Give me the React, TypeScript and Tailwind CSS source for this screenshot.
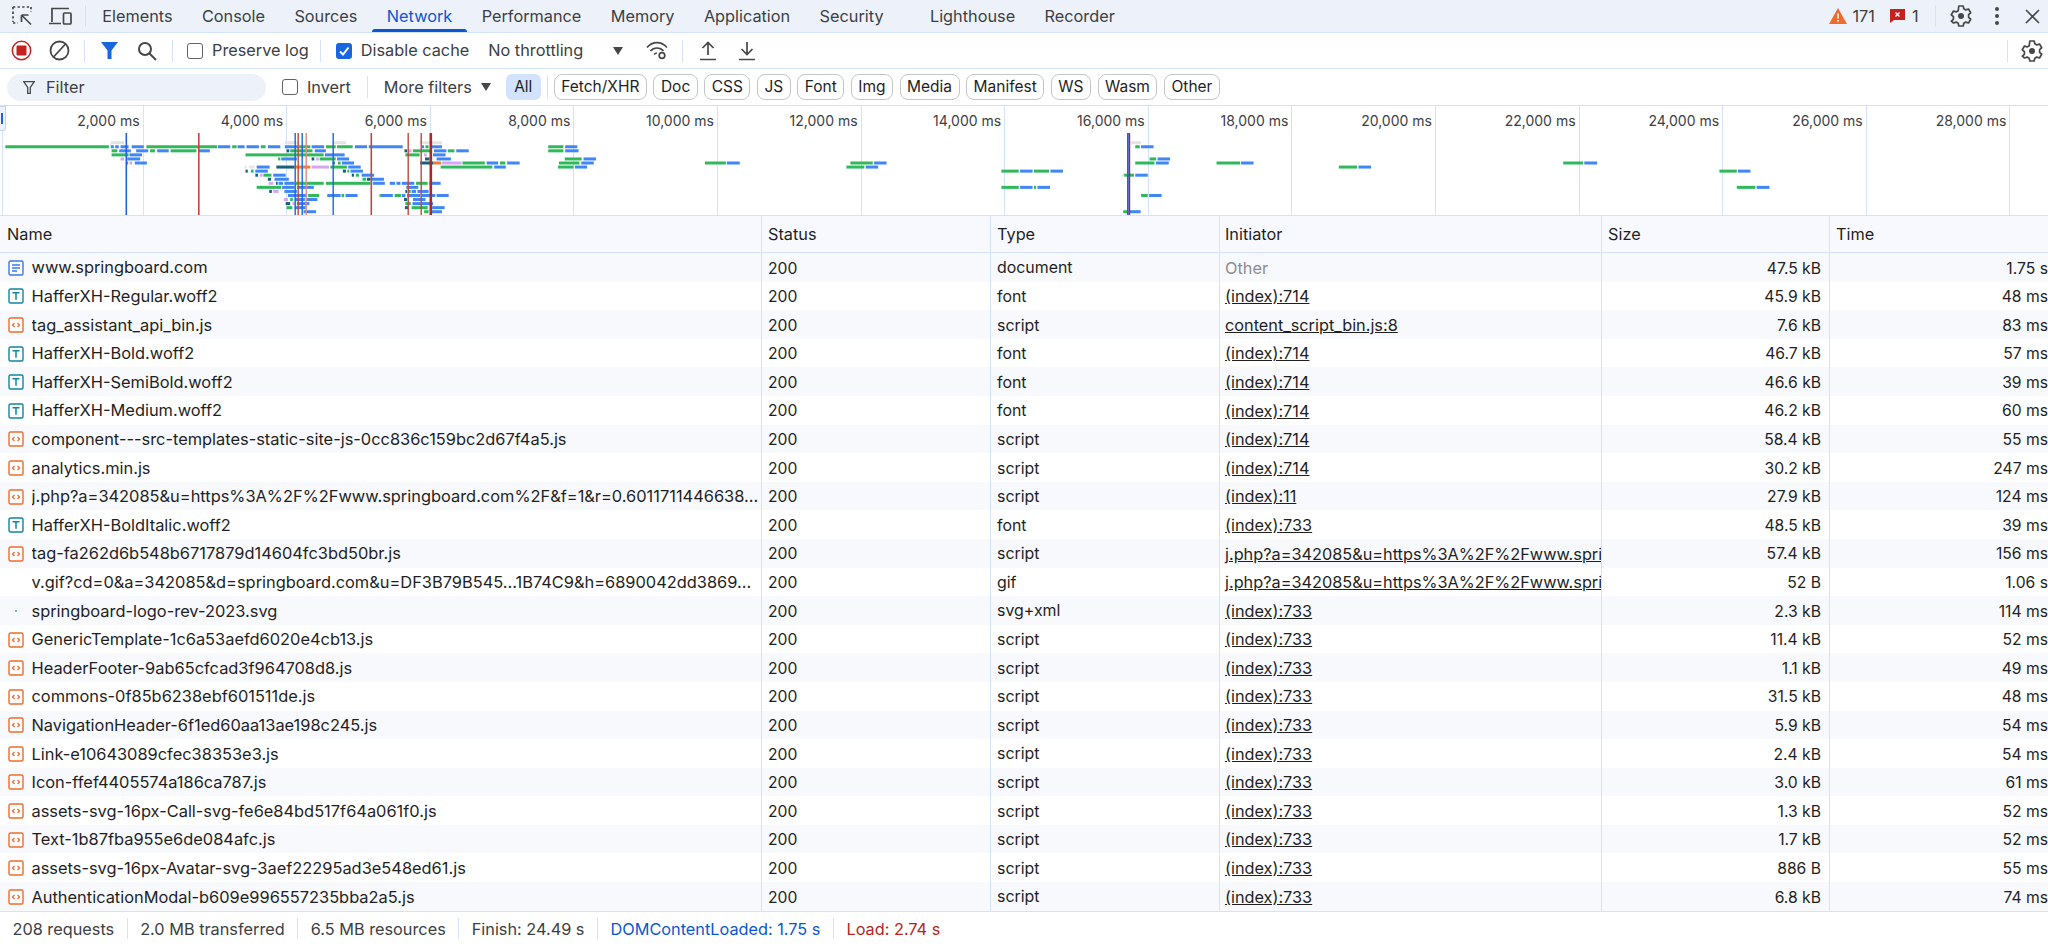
import { ReactNode } from "react";

const tabs = ["Elements", "Console", "Sources", "Network", "Performance", "Memory", "Application", "Security", "Lighthouse", "Recorder"];
const chips = ["Fetch/XHR", "Doc", "CSS", "JS", "Font", "Img", "Media", "Manifest", "WS", "Wasm", "Other"];
const ticks = ["2,000", "4,000", "6,000", "8,000", "10,000", "12,000", "14,000", "16,000", "18,000", "20,000", "22,000", "24,000", "26,000", "28,000"];

const spri = "j.php?a=342085&u=https%3A%2F%2Fwww.springboard.com%2F&f=1&r=0.6011711446638";

type Row = [string, string, string, string, string, string];

const rows: Row[] = [
  ["doc", "www.springboard.com", "document", "Other", "47.5 kB", "1.75 s"],
  ["font", "HafferXH-Regular.woff2", "font", "(index):714", "45.9 kB", "48 ms"],
  ["js", "tag_assistant_api_bin.js", "script", "content_script_bin.js:8", "7.6 kB", "83 ms"],
  ["font", "HafferXH-Bold.woff2", "font", "(index):714", "46.7 kB", "57 ms"],
  ["font", "HafferXH-SemiBold.woff2", "font", "(index):714", "46.6 kB", "39 ms"],
  ["font", "HafferXH-Medium.woff2", "font", "(index):714", "46.2 kB", "60 ms"],
  ["js", "component---src-templates-static-site-js-0cc836c159bc2d67f4a5.js", "script", "(index):714", "58.4 kB", "55 ms"],
  ["js", "analytics.min.js", "script", "(index):714", "30.2 kB", "247 ms"],
  ["js", "j.php?a=342085&u=https%3A%2F%2Fwww.springboard.com%2F&f=1&r=0.6011711446638...", "script", "(index):11", "27.9 kB", "124 ms"],
  ["font", "HafferXH-BoldItalic.woff2", "font", "(index):733", "48.5 kB", "39 ms"],
  ["js", "tag-fa262d6b548b6717879d14604fc3bd50br.js", "script", spri, "57.4 kB", "156 ms"],
  ["none", "v.gif?cd=0&a=342085&d=springboard.com&u=DF3B79B545...1B74C9&h=6890042dd3869...", "gif", spri, "52 B", "1.06 s"],
  ["svg", "springboard-logo-rev-2023.svg", "svg+xml", "(index):733", "2.3 kB", "114 ms"],
  ["js", "GenericTemplate-1c6a53aefd6020e4cb13.js", "script", "(index):733", "11.4 kB", "52 ms"],
  ["js", "HeaderFooter-9ab65cfcad3f964708d8.js", "script", "(index):733", "1.1 kB", "49 ms"],
  ["js", "commons-0f85b6238ebf601511de.js", "script", "(index):733", "31.5 kB", "48 ms"],
  ["js", "NavigationHeader-6f1ed60aa13ae198c245.js", "script", "(index):733", "5.9 kB", "54 ms"],
  ["js", "Link-e10643089cfec38353e3.js", "script", "(index):733", "2.4 kB", "54 ms"],
  ["js", "Icon-ffef4405574a186ca787.js", "script", "(index):733", "3.0 kB", "61 ms"],
  ["js", "assets-svg-16px-Call-svg-fe6e84bd517f64a061f0.js", "script", "(index):733", "1.3 kB", "52 ms"],
  ["js", "Text-1b87fba955e6de084afc.js", "script", "(index):733", "1.7 kB", "52 ms"],
  ["js", "assets-svg-16px-Avatar-svg-3aef22295ad3e548ed61.js", "script", "(index):733", "886 B", "55 ms"],
  ["js", "AuthenticationModal-b609e996557235bba2a5.js", "script", "(index):733", "6.8 kB", "74 ms"],
];

const colors: Record<string, string> = {
  g: "#2fb95b",
  b: "#4086f4",
  p: "#d5a6f3",
  t: "#17607c",
  o: "#ee7a35",
  l: "#e3e4e6",
};

// [row, start, end, colour], measured off the ruler; groups carry their own origin and scale
const barGroups: { dx: number; k: number; bars: [number, number, number, string][] }[] = [
  {
    dx: 0,
    k: 2.24,
    bars: [
      [0, 248, 278, "l"], [0, 638, 668, "l"], [0, 745, 775, "l"], [0, 940, 990, "l"],
      [1, 12, 244, "g"], [1, 248, 255, "b"], [1, 258, 266, "b"], [1, 270, 288, "b"], [1, 295, 322, "b"], [1, 328, 486, "g"], [1, 488, 516, "b"], [1, 520, 530, "g"], [1, 532, 548, "b"], [1, 552, 580, "b"], [1, 584, 595, "g"], [1, 600, 628, "b"], [1, 638, 668, "b"], [1, 670, 695, "g"], [1, 698, 726, "b"], [1, 730, 752, "g"], [1, 755, 790, "g"], [1, 795, 822, "b"], [1, 826, 902, "b"], [1, 945, 950, "b"], [1, 953, 960, "g"], [1, 965, 990, "b"],
      [2, 250, 263, "g"], [2, 267, 293, "b"], [2, 305, 332, "b"], [2, 336, 347, "g"], [2, 352, 378, "b"], [2, 382, 440, "g"], [2, 444, 470, "b"], [2, 642, 648, "t"], [2, 650, 700, "g"], [2, 705, 730, "b"], [2, 906, 912, "t"], [2, 914, 922, "p"], [2, 925, 968, "g"], [2, 972, 1000, "b"], [2, 1003, 1018, "g"], [2, 1022, 1050, "b"],
      [3, 250, 288, "g"], [3, 290, 318, "b"], [3, 550, 725, "g"], [3, 728, 772, "b"], [3, 908, 940, "g"], [3, 950, 956, "p"], [3, 970, 998, "b"],
      [4, 270, 278, "p"], [4, 285, 314, "b"], [4, 623, 628, "g"], [4, 630, 665, "b"], [4, 698, 704, "t"], [4, 708, 714, "p"], [4, 716, 752, "g"], [4, 755, 782, "b"], [4, 952, 962, "t"], [4, 978, 1010, "b"],
      [5, 283, 287, "b"], [5, 290, 296, "p"], [5, 302, 329, "b"], [5, 745, 750, "t"], [5, 757, 763, "g"], [5, 766, 793, "b"], [5, 941, 970, "t"], [5, 970, 988, "o"], [5, 990, 1034, "p"], [5, 1036, 1086, "g"], [5, 1090, 1116, "b"], [5, 1120, 1132, "g"], [5, 1136, 1164, "b"],
      [6, 548, 552, "l"], [6, 558, 570, "l"], [6, 575, 604, "b"], [6, 619, 660, "t"], [6, 660, 695, "o"], [6, 698, 737, "p"], [6, 740, 777, "g"], [6, 780, 808, "b"], [6, 987, 1103, "g"], [6, 1107, 1133, "b"],
      [7, 550, 555, "t"], [7, 562, 568, "g"], [7, 572, 600, "b"], [7, 768, 775, "t"], [7, 778, 782, "g"], [7, 785, 813, "b"],
      [8, 572, 578, "t"], [8, 582, 588, "p"], [8, 590, 608, "g"], [8, 612, 640, "b"], [8, 788, 793, "t"], [8, 797, 804, "g"], [8, 810, 838, "b"],
      [9, 600, 607, "t"], [9, 615, 647, "b"], [9, 812, 820, "g"], [9, 822, 830, "t"], [9, 833, 860, "b"],
      [10, 602, 612, "p"], [10, 618, 622, "t"], [10, 624, 634, "b"], [10, 637, 660, "b"], [10, 663, 725, "g"], [10, 730, 830, "g"], [10, 835, 862, "b"], [10, 873, 885, "b"], [10, 888, 897, "b"], [10, 900, 928, "b"], [10, 932, 958, "g"], [10, 962, 987, "b"],
      [11, 575, 630, "g"], [11, 632, 660, "b"], [11, 665, 703, "b"], [11, 910, 937, "b"],
      [12, 603, 609, "t"], [12, 612, 624, "p"], [12, 637, 665, "b"], [12, 908, 912, "t"], [12, 914, 920, "g"], [12, 922, 932, "b"], [12, 935, 960, "b"],
      [13, 645, 688, "b"], [13, 690, 715, "g"], [13, 733, 763, "b"], [13, 765, 771, "g"], [13, 774, 801, "b"], [13, 850, 853, "g"], [13, 853, 880, "b"], [13, 884, 898, "g"], [13, 900, 908, "b"], [13, 912, 942, "b"], [13, 945, 975, "b"], [13, 978, 1005, "b"],
      [14, 636, 645, "p"], [14, 650, 656, "g"], [14, 660, 683, "b"], [14, 687, 711, "b"], [14, 905, 912, "t"], [14, 925, 953, "b"],
      [15, 640, 650, "t"], [15, 655, 662, "p"], [15, 665, 693, "b"], [15, 908, 920, "g"], [15, 924, 970, "b"],
      [16, 642, 655, "g"], [16, 660, 685, "b"], [16, 907, 915, "t"], [16, 922, 958, "g"], [16, 968, 996, "b"],
      [17, 680, 708, "b"], [17, 950, 960, "g"], [17, 965, 990, "b"],
      [1, 1228, 1262, "g"], [1, 1266, 1293, "b"], [2, 1228, 1262, "g"], [2, 1266, 1296, "b"], [4, 1265, 1303, "g"], [4, 1307, 1335, "b"], [5, 1252, 1298, "g"], [5, 1302, 1330, "b"], [6, 1250, 1285, "g"], [6, 1288, 1315, "b"],
    ],
  },
  {
    dx: 700,
    k: 2.24,
    bars: [
      [5, 11, 58, "g"], [5, 60, 89, "b"], [5, 337, 387, "g"], [5, 390, 418, "b"], [6, 328, 368, "g"], [6, 371, 399, "b"],
      [7, 675, 714, "g"], [7, 717, 745, "b"], [7, 748, 782, "g"], [7, 785, 813, "b"],
      [8, 945, 950, "l"], [8, 950, 972, "g"], [8, 975, 1003, "b"],
      [11, 675, 714, "g"], [11, 717, 745, "b"], [11, 748, 753, "g"], [11, 756, 784, "b"],
      [13, 988, 1003, "g"], [13, 1006, 1034, "b"], [17, 948, 958, "g"], [17, 962, 987, "b"],
      [4, 1007, 1022, "g"], [4, 1025, 1053, "b"], [5, 975, 1018, "g"], [5, 1021, 1050, "b"], [5, 1157, 1210, "g"], [5, 1212, 1240, "b"],
      [1, 975, 985, "g"], [1, 988, 1016, "b"], [0, 965, 988, "l"], [6, 1431, 1472, "g"], [6, 1475, 1503, "b"],
    ],
  },
  {
    dx: 1400,
    k: 2.42,
    bars: [
      [5, 395, 443, "g"], [5, 446, 477, "b"], [7, 773, 815, "g"], [7, 818, 848, "b"], [11, 815, 860, "g"], [11, 863, 894, "b"],
    ],
  },
];

const markers: [number, string, number][] = [
  [125.5, "#1a66e0", 1.6], [198, "#c4463f", 1.6], [294.5, "#1a66e0", 1.4], [297.5, "#c4463f", 1.4], [301.5, "#1a66e0", 1.4], [305.5, "#e2897f", 1.4], [332.5, "#1a66e0", 1.4], [370.5, "#c4463f", 1.6], [407.5, "#c4463f", 1.4], [420.5, "#c4463f", 1.4], [429.5, "#b3261e", 2.6], [1127, "#1a66e0", 1.8], [1128.8, "#b3261e", 1.4],
];

const Overview = () => (
  <svg className="absolute left-0 top-0" width="2048" height="109" viewBox="0 0 2048 109">
    {barGroups.map((g) =>
      g.bars.map(([r, a, b, c], i) => (
        <rect key={`${g.dx}-${i}`} x={g.dx + a / g.k} y={35.2 + r * 4.06} width={(b - a) / g.k} height="3" fill={colors[c]} />
      ))
    )}
    {markers.map(([x, c, w]) => (
      <rect key={x} x={x} y="27" width={w} height="82" fill={c} />
    ))}
  </svg>
);

const Gear = ({ className = "" }: { className?: string }) => (
  <svg className={className} width="22" height="24" viewBox="0 0 22 24" fill="none" stroke="#474747" strokeWidth="1.7" strokeLinejoin="round">
    <path d="M8.8 2h4.4l.6 2.8 2 1.1 2.7-.9 2.2 3.8-2.1 1.9v2.6l2.1 1.9-2.2 3.8-2.7-.9-2 1.1-.6 2.8H8.8l-.6-2.8-2-1.1-2.7.9L1.300 17.200l2.100-1.900v-2.600L1.300 10.800 3.500 7l2.700.9 2-1.100z" />
    <circle cx="11" cy="12" r="3" fill="#474747" stroke="none" />
  </svg>
);

const Divider = ({ className = "" }: { className?: string }) => <span className={`w-px h-[22px] bg-[#d3e3fd] shrink-0 ${className}`} />;

const Caret = ({ className = "" }: { className?: string }) => (
  <svg className={className} width="10" height="8" viewBox="0 0 10 8">
    <path d="M0 0h10L5 8z" fill="#474747" />
  </svg>
);

const FileIcon = ({ kind }: { kind: string }) => {
  if (kind === "none") return <span className="w-4 h-4 shrink-0" />;
  if (kind === "svg")
    return (
      <span className="w-4 h-4 shrink-0 flex items-center justify-center">
        <span className="w-[2px] h-[2px] bg-[#7fb5a6]" />
      </span>
    );
  const stroke = kind === "doc" ? "#3b78e7" : kind === "font" ? "#12859e" : "#ee6c2d";
  return (
    <svg className="shrink-0" width="16" height="16" viewBox="0 0 16 16" fill="none" stroke={stroke} strokeWidth="1.4">
      <rect x="1" y="1" width="14" height="14" rx="1.500" fill="#fff" />
      {kind === "doc" && <path d="M4 5h8M4 8h8M4 11h5" strokeWidth="1.500" />}
      {kind === "font" && <path d="M4.500 4.700h7M8 4.700v7" strokeWidth="1.500" />}
      {kind === "js" && <path d="M6.500 6 4.500 8l2 2M9.500 6l2 2-2 2" strokeWidth="1.300" />}
    </svg>
  );
};

const Check = ({ on, className = "" }: { on?: boolean; className?: string }) =>
  on ? (
    <span className={`w-4 h-4 rounded-[3px] bg-[#1a66e0] flex items-center justify-center shrink-0 ${className}`}>
      <svg width="12" height="12" viewBox="0 0 12 12" fill="none" stroke="#fff" strokeWidth="2">
        <path d="M2 6.500 5 9.500 10.500 2.500" />
      </svg>
    </span>
  ) : (
    <span className={`w-4 h-4 rounded-[3px] border border-[#5f6368] bg-white shrink-0 ${className}`} />
  );

const Cell = ({ className, children }: { className: string; children: ReactNode }) => (
  <div className={`h-full flex items-center overflow-hidden whitespace-nowrap shrink-0 ${className}`}>{children}</div>
);

const NetworkRow = ({ row, index }: { row: Row; index: number }) => {
  const [kind, name, type, initiator, size, time] = row;
  return (
    <div className={`flex h-[28.6px] ${index % 2 === 0 ? "bg-[#f7f9fd]" : "bg-white"}`}>
      <Cell className="w-[762px] pt-px pl-[8px] gap-[7.500px] border-r border-[#d3e3fd] text-[16.400px]">
        <FileIcon kind={kind} />
        <span className="overflow-hidden">{name}</span>
      </Cell>
      <Cell className="w-[229px] pt-[2px] pl-[6px] border-r border-[#d3e3fd] text-[15.700px]">200</Cell>
      <Cell className="w-[229px] pt-[2px] pl-[6px] border-r border-[#d3e3fd] text-[15.900px]">{type}</Cell>
      <Cell className="w-[382px] pt-px pl-[5px] border-r border-[#d3e3fd] text-[16.300px]">
        {initiator === "Other" ? <span className="text-[#8c8c8c]">Other</span> : <span className="underline">{initiator}</span>}
      </Cell>
      <Cell className="w-[228px] pt-[2px] justify-end pr-[8px] border-r border-[#d3e3fd] text-[15.700px]">{size}</Cell>
      <Cell className="w-[226px] pt-[2px] justify-end pr-[8px] text-[15.700px]">{time}</Cell>
    </div>
  );
};

export default function App() {
  return (
    <div className="h-[946px] w-[2048px] overflow-hidden bg-white flex flex-col text-[16.300px] text-[#1f1f1f] font-['Inter',sans-serif]">
      {/* tab strip */}
      <div className="h-[33px] shrink-0 bg-[#edf2fa] border-b border-[#d3e3fd] flex items-center text-[#3c4043]">
        <svg className="ml-[12px]" width="21" height="20" viewBox="0 0 21 20" fill="none" stroke="#474747" strokeWidth="1.700">
          <path d="M1 1h18M1 1v15M1 17h5M19 1v5" strokeDasharray="2.300 2.300" />
          <path d="M9.500 9 19 18.500M9.500 9v7M9.500 9h7" />
        </svg>
        <svg className="ml-[16px]" width="23" height="19" viewBox="0 0 23 19" fill="none" stroke="#474747" strokeWidth="1.700">
          <path d="M3 15V1.500h17M0 16.500h12" />
          <rect x="14.500" y="6" width="7.500" height="11" rx="1" />
        </svg>
        <Divider className="ml-[13px] mr-[1.500px]" />
        {tabs.map((t) => (
          <div
            key={t}
            className={`relative h-full pt-px flex items-center px-[14.700px] ${t === "Lighthouse" ? "ml-[17px]" : ""} ${t === "Network" ? "text-[#0b57d0]" : ""}`}
          >
            {t}
            {t === "Network" && <span className="absolute left-0 right-0 bottom-0 h-[3px] rounded-t bg-[#0b57d0]" />}
          </div>
        ))}
        <div className="ml-auto flex items-center">
          <svg width="18" height="16" viewBox="0 0 18 16">
            <path d="M9 0 18 16H0z" fill="#ee6c2d" />
            <path d="M9 5.500v5M9 12v1.800" stroke="#fff" strokeWidth="1.500" />
          </svg>
          <span className="ml-[5px]">171</span>
          <svg className="ml-[15px]" width="15" height="16" viewBox="0 0 15 16">
            <path d="M0 1h15v11H4l-4 3z" fill="#c5221f" />
            <path d="m5.500 4.500 4 4m0-4-4 4" stroke="#fff" strokeWidth="1.300" />
          </svg>
          <span className="ml-[7px]">1</span>
          <Divider className="ml-[16px]" />
          <Gear className="ml-[14px]" />
          <svg className="ml-[22px]" width="6" height="20" viewBox="0 0 6 20" fill="#474747">
            <circle cx="3" cy="3" r="2" />
            <circle cx="3" cy="10" r="2" />
            <circle cx="3" cy="17" r="2" />
          </svg>
          <svg className="ml-[25.500px] mr-[8px]" width="15" height="15" viewBox="0 0 15 15" stroke="#474747" strokeWidth="1.600">
            <path d="m1 1 13 13M14 1 1 14" />
          </svg>
        </div>
      </div>

      {/* toolbar */}
      <div className="h-[36px] shrink-0 border-b border-[#d3e3fd] flex items-center text-[#3c4043]">
        <svg className="ml-[11px]" width="21" height="21" viewBox="0 0 21 21">
          <circle cx="10.500" cy="10.500" r="9.200" fill="none" stroke="#c5221f" strokeWidth="1.500" />
          <rect x="5.500" y="5.500" width="10" height="10" rx="1" fill="#c5221f" />
        </svg>
        <svg className="ml-[17px]" width="21" height="21" viewBox="0 0 21 21" fill="none" stroke="#474747" strokeWidth="1.800">
          <circle cx="10.500" cy="10.500" r="9" />
          <path d="M4.500 17 16.500 4" />
        </svg>
        <Divider className="ml-[14px]" />
        <svg className="ml-[16px]" width="17" height="17" viewBox="0 0 17 17">
          <path d="M0 0h17l-6.500 8.500V17H6.500V8.500z" fill="#1a66e0" />
        </svg>
        <svg className="ml-[19px]" width="20" height="20" viewBox="0 0 20 20" fill="none" stroke="#474747" strokeWidth="2">
          <circle cx="8" cy="8" r="6" />
          <path d="m12.500 12.500 6.500 6.500" />
        </svg>
        <Divider className="ml-[15px] mr-[14px]" />
        <Check />
        <span className="ml-[9px]">Preserve log</span>
        <Divider className="ml-[11px] mr-[15px]" />
        <Check on />
        <span className="ml-[9px]">Disable cache</span>
        <span className="ml-[19px]">No throttling</span>
        <Caret className="ml-[30px]" />
        <svg className="ml-[23px]" width="22" height="19" viewBox="0 0 22 19" fill="none" stroke="#474747" strokeWidth="1.700">
          <path d="M1 6.500C6.500 0 15.500 0 21 6.500M4.500 10c3.500-4 9.500-4 13 0M8 13.500c1-1 2-1.500 3-1.500" />
          <circle cx="16" cy="14.500" r="2.800" />
        </svg>
        <Divider className="ml-[14px] mr-[16px]" />
        <svg width="18" height="20" viewBox="0 0 18 20" fill="none" stroke="#474747" strokeWidth="1.700">
          <path d="M9 14V2M3.500 7 9 1.500 14.500 7M1 18.500h16" />
        </svg>
        <svg className="ml-[21px]" width="18" height="20" viewBox="0 0 18 20" fill="none" stroke="#474747" strokeWidth="1.700">
          <path d="M9 1v12M3.500 8 9 13.500 14.500 8M1 18.500h16" />
        </svg>
        <div className="ml-auto flex items-center">
          <Divider className="mr-[13px]" />
          <Gear className="mr-[5px]" />
        </div>
      </div>

      {/* filter bar */}
      <div className="h-[37px] shrink-0 border-b border-[#d3e3fd] flex items-center text-[#3c4043]">
        <div className="ml-[7px] w-[259px] h-[27px] rounded-full bg-[#edf2fa] flex items-center pl-[16px]">
          <svg width="12" height="13" viewBox="0 0 12 13" fill="none" stroke="#474747" strokeWidth="1.300">
            <path d="M.700.700h10.600L7.300 6.500v6H4.700v-6z" />
          </svg>
          <span className="ml-[11px] pt-px">Filter</span>
        </div>
        <Check className="ml-[16px]" />
        <span className="ml-[9px] pt-px">Invert</span>
        <Divider className="ml-[16px]" />
        <span className="ml-[16px] pt-px">More filters</span>
        <Caret className="ml-[9px]" />
        <span className="ml-[15px] h-[26px] w-[35px] rounded-[6px] bg-[#d3e3fd] flex items-center justify-center text-[15.500px] text-[#1f1f1f]">All</span>
        <Divider className="ml-[6px] mr-[6px]" />
        <div className="flex gap-[6.500px]">
          {chips.map((c) => (
            <span key={c} className="h-[26px] px-[6.500px] rounded-[8px] border border-[#c4c7c5] flex items-center text-[15.500px] text-[#1f1f1f]">
              {c}
            </span>
          ))}
        </div>
      </div>

      {/* overview */}
      <div className="relative h-[110px] shrink-0 border-b border-[#d3e3fd] overflow-hidden">
        <div className="flex h-full">
          {ticks.map((t) => (
            <div key={t} className="w-[143.600px] shrink-0 border-r border-[#d3e3fd] text-right pr-[3px] pt-[4px] text-[14px] text-[#3c4043]">
              {t} ms
            </div>
          ))}
        </div>
        <Overview />
        <span className="absolute left-0 top-0 w-[6px] h-[25px] rounded-br-[3px] border border-l-0 border-[#c2d4f5] bg-[#edf2fa]">
          <span className="absolute left-[1px] top-[6px] w-[1.500px] h-[11px] bg-[#1a66e0]" />
        </span>
        <span className="absolute left-[2px] top-[25px] bottom-0 w-px bg-[#d3e3fd]" />
      </div>

      {/* request table */}
      <div className="flex h-[37px] shrink-0 bg-[#f8f9fe] border-b border-[#d3e3fd] text-[#1f1f1f]">
        <Cell className="w-[762px] pt-px pl-[7px] border-r border-[#d3e3fd]">Name</Cell>
        <Cell className="w-[229px] pt-px pl-[6px] border-r border-[#d3e3fd]">Status</Cell>
        <Cell className="w-[229px] pt-px pl-[6px] border-r border-[#d3e3fd]">Type</Cell>
        <Cell className="w-[382px] pt-px pl-[5px] border-r border-[#d3e3fd]">Initiator</Cell>
        <Cell className="w-[228px] pt-px pl-[6px] border-r border-[#d3e3fd]">Size</Cell>
        <Cell className="w-[226px] pt-px pl-[6px]">Time</Cell>
      </div>
      <div className="shrink-0">
        {rows.map((r, i) => (
          <NetworkRow key={r[1]} row={r} index={i} />
        ))}
      </div>

      {/* summary */}
      <div className="flex-1 border-t border-[#d3e3fd] flex items-center text-[#3c4043]">
        {["208 requests", "2.0 MB transferred", "6.5 MB resources", "Finish: 24.49 s"].map((s) => (
          <span key={s} className="px-[12.500px] h-[21px] pt-px flex items-center border-r border-[#d3e3fd]">
            {s}
          </span>
        ))}
        <span className="px-[12.500px] h-[21px] pt-px flex items-center border-r border-[#d3e3fd] text-[#0b57d0]">DOMContentLoaded: 1.75 s</span>
        <span className="px-[12.500px] pt-px text-[#b3261e]">Load: 2.74 s</span>
      </div>
    </div>
  );
}
